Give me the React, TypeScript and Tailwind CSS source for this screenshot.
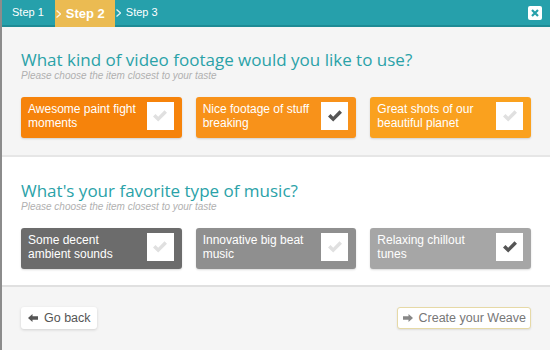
import React from "react";

type Choice = { label: string; bg: string; checked: boolean };

const footage: Choice[] = [
  { label: "Awesome paint fight moments", bg: "bg-[#f6830b]", checked: false },
  { label: "Nice footage of stuff breaking", bg: "bg-[#f8921a]", checked: true },
  { label: "Great shots of our beautiful planet", bg: "bg-[#faa11e]", checked: false },
];

const music: Choice[] = [
  { label: "Some decent ambient sounds", bg: "bg-[#6c6c6c]", checked: false },
  { label: "Innovative big beat music", bg: "bg-[#8f8f8f]", checked: false },
  { label: "Relaxing chillout tunes", bg: "bg-[#a6a6a6]", checked: true },
];

function Check({ on }: { on: boolean }) {
  return (
    <svg width="16" height="14" viewBox="0 0 16 14">
      <path
        d="M1 7.5 L3.5 5 L6.2 7.7 L12.5 1.2 L15 3.7 L6.2 12.5 Z"
        fill={on ? "#555555" : "#e0e0e0"}
      />
    </svg>
  );
}

function Card({ c }: { c: Choice }) {
  return (
    <div className={`${c.bg} flex h-[41px] items-start justify-between rounded-[3px] pl-[7px] pr-[8px] pt-[5px] shadow-[0_1px_2px_rgba(0,0,0,0.15)]`}>
      <span className="w-[112px] text-[12px] leading-[14px] text-white">{c.label}</span>
      <div className="flex h-[28px] w-[27px] flex-none items-center justify-center bg-white">
        <Check on={c.checked} />
      </div>
    </div>
  );
}

function Question({ title, items }: { title: string; items: Choice[] }) {
  return (
    <div className="px-[19px]">
      <h2 className="font-['Open_Sans',sans-serif] text-[17px] leading-[20px] text-[#2aa2a8]">{title}</h2>
      <p className="text-[10px] italic leading-[12px] text-[#b0b0b0]">Please choose the item closest to your taste</p>
      <div className="mt-[15px] grid grid-cols-3 gap-[14px]">
        {items.map((c) => (
          <Card key={c.label} c={c} />
        ))}
      </div>
    </div>
  );
}

function Chevron() {
  return (
    <svg width="5" height="8" viewBox="0 0 5 8">
      <path d="M0.5 0.5 L4.5 4 L0.5 7.5" fill="none" stroke="#ffffff" strokeWidth="1.3" opacity="0.85" />
    </svg>
  );
}

export default function App() {
  return (
    <div className="h-[350px] w-[550px] overflow-hidden border-l-2 border-[#8c8c8c] bg-[#f5f5f5] font-['Liberation_Sans',Arial,sans-serif]">
      <header className="flex h-[27px] items-center border-b-2 border-[#1e8b95] bg-[#26a0ab] pr-[8px]">
        <span className="ml-[10px] text-[11px] text-white">Step 1</span>
        <div className="ml-[11px] flex h-[27px] w-[60px] items-center self-start bg-[#ebbb52]">
          <span className="ml-[1px]"><Chevron /></span>
          <span className="ml-[5px] text-[13px] font-bold text-white">Step 2</span>
        </div>
        <span className="ml-[1px]"><Chevron /></span>
        <span className="ml-[5px] text-[11px] text-white">Step 3</span>
        <div className="ml-auto flex h-[14px] w-[14px] items-center justify-center rounded-[2px] bg-white">
          <svg width="8" height="8" viewBox="0 0 8 8">
            <path d="M1 1 L7 7 M7 1 L1 7" stroke="#26a0ab" strokeWidth="2.2" />
          </svg>
        </div>
      </header>

      <section className="h-[130px] border-b-2 border-[#e6e6e6] pt-[23px]">
        <Question title="What kind of video footage would you like to use?" items={footage} />
      </section>

      <section className="h-[130px] border-b-2 border-[#e0e0e0] bg-white pt-[24px]">
        <Question title="What's your favorite type of music?" items={music} />
      </section>

      <footer className="flex items-center justify-between px-[19px] pt-[20px]">
        <button className="flex h-[22px] items-center gap-[6px] whitespace-nowrap rounded-[3px] bg-white pl-[7px] pr-[6px] text-[12.5px] text-[#555] shadow-[0_1px_3px_rgba(0,0,0,0.15)]">
          <svg width="10" height="8" viewBox="0 0 10 8">
            <path d="M0 4 L4.5 0 L4.5 2.3 L10 2.3 L10 5.7 L4.5 5.7 L4.5 8 Z" fill="#555" />
          </svg>
          Go back
        </button>
        <button className="flex h-[22px] items-center gap-[6px] whitespace-nowrap rounded-[3px] border border-[#e6d9a6] bg-white pl-[5px] pr-[4px] text-[12.5px] text-[#777] shadow-[0_1px_2px_rgba(0,0,0,0.1)]">
          <svg width="10" height="8" viewBox="0 0 10 8">
            <path d="M10 4 L5.5 0 L5.5 2.3 L0 2.3 L0 5.7 L5.5 5.7 L5.5 8 Z" fill="#888" />
          </svg>
          Create your Weave
        </button>
      </footer>
    </div>
  );
}
